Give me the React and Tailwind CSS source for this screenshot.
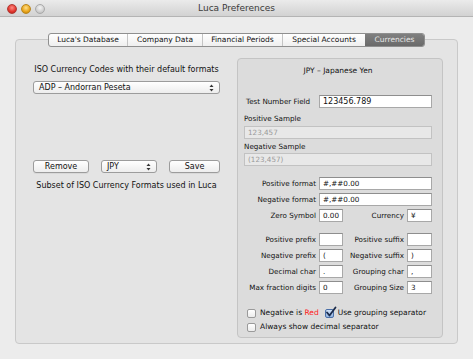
import React from "react";

const F = { fontFamily: '"DejaVu Sans", "Liberation Sans", sans-serif' };

function Arrows() {
  return (
    <svg width="5" height="8" viewBox="0 0 5 8" className="shrink-0">
      <path d="M2.5 0.5 L4.5 3 L0.5 3 Z" fill="#333" />
      <path d="M2.5 7.5 L4.5 5 L0.5 5 Z" fill="#333" />
    </svg>
  );
}

function Field({ value = "", className = "", disabled = false }) {
  return (
    <div
      className={
        "h-[13px] flex items-center px-[3px] text-[7.2px] leading-none border " +
        (disabled
          ? "bg-[#e8e8e8] border-[#c2c2c2] text-[#9a9a9a] "
          : "bg-white border-[#a8a8a8] border-t-[#8e8e8e] text-[#111] ") +
        className
      }
    >
      {value}
    </div>
  );
}

function Btn({ children, className = "" }) {
  return (
    <div
      className={
        "h-[13px] flex items-center justify-center rounded-[3px] border border-[#9c9c9c] bg-gradient-to-b from-[#ffffff] to-[#ededed] text-[8px] leading-none text-[#111] shadow-[0_1px_0_rgba(0,0,0,0.05)] " +
        className
      }
    >
      {children}
    </div>
  );
}

function Check({ checked }) {
  return (
    <div className="relative w-[9px] h-[9px] shrink-0">
      <div
        className={
          "w-[9px] h-[9px] rounded-[2px] border " +
          (checked
            ? "border-[#4a6fa8] bg-gradient-to-b from-[#cfe0f5] to-[#8fb2e0]"
            : "border-[#9a9a9a] bg-gradient-to-b from-white to-[#ececec]")
        }
      />
      {checked && (
        <svg width="12" height="12" viewBox="0 0 12 12" className="absolute left-[0px] top-[-3px]">
          <path d="M2 6.5 L4.5 9.5 L10.5 1.5" stroke="#1a2a4a" strokeWidth="1.8" fill="none" strokeLinecap="round" strokeLinejoin="round" />
        </svg>
      )}
    </div>
  );
}

const tabs = ["Luca's Database", "Company Data", "Financial Periods", "Special Accounts", "Currencies"];
const tabW = [79, 75, 80, 82, 59];

export default function App() {
  return (
    <div style={F} className="w-[473px] h-[359px] bg-[#ececec] flex flex-col overflow-hidden text-[#111]">
      {/* title bar */}
      <div className="relative h-[17px] shrink-0 bg-gradient-to-b from-[#ebebeb] to-[#d2d2d2] border-b border-[#b4b4b4] flex items-center justify-center">
        <div className="absolute left-[7px] top-[4px] flex gap-[4px]">
          <div className="w-[10px] h-[10px] rounded-full bg-[radial-gradient(circle_at_50%_35%,#ff8c84,#e0342c_60%,#a8201a)] border border-[#b03a34]" />
          <div className="w-[10px] h-[10px] rounded-full bg-[radial-gradient(circle_at_50%_35%,#ffe08a,#e8a318_60%,#b07a10)] border border-[#b9861e]" />
          <div className="w-[10px] h-[10px] rounded-full bg-[radial-gradient(circle_at_50%_35%,#f4f4f4,#cfcfcf_60%,#b4b4b4)] border border-[#a9a9a9]" />
        </div>
        <span className="text-[9px] leading-none text-[#3a3a3a]">Luca Preferences</span>
      </div>

      {/* content */}
      <div className="flex flex-col px-[15px] pt-[16px]">
        <div className="relative z-10 self-center flex h-[14px] rounded-[3px] border border-[#8f8f8f] bg-gradient-to-b from-white to-[#efefef] overflow-hidden">
          {tabs.map((t, i) => (
            <div
              key={t}
              style={{ width: tabW[i] }}
              className={
                "flex items-center justify-center text-[7.5px] leading-none " +
                (i === 4
                  ? "bg-gradient-to-b from-[#808080] to-[#6a6a6a] text-[#e6e6e6]"
                  : "text-[#111] ") +
                (i < 3 ? "border-r border-[#c4c4c4]" : "")
              }
            >
              {t}
            </div>
          ))}
        </div>

        <div className="-mt-[8px] h-[305px] rounded-[4px] border border-[#c9c9c9] bg-[#e4e4e4] flex pl-[17px] pr-[14px] pt-[18px] pb-[5px] gap-[17px]">
          {/* left column */}
          <div className="w-[187px] flex flex-col">
            <div className="mt-[7px] h-[10px] text-[8px] leading-[10px] text-center">ISO Currency Codes with their default formats</div>
            <div className="mt-[6px] h-[13px] rounded-[3px] border border-[#9c9c9c] bg-gradient-to-b from-white to-[#ededed] flex items-center justify-between pl-[5px] pr-[5px] text-[8px] leading-none">
              <span>ADP – Andorran Peseta</span>
              <Arrows />
            </div>
            <div className="mt-[66px] flex justify-between">
              <Btn className="w-[56px]">Remove</Btn>
              <div className="w-[56px] h-[13px] rounded-[3px] border border-[#9c9c9c] bg-gradient-to-b from-white to-[#ededed] flex items-center justify-between px-[5px] text-[8px] leading-none">
                <span>JPY</span>
                <Arrows />
              </div>
              <Btn className="w-[51px]">Save</Btn>
            </div>
            <div className="mt-[8px] h-[10px] text-[8px] leading-[10px] text-center">Subset of ISO Currency Formats used in Luca</div>
          </div>

          {/* right group box */}
          <div className="w-[206px] h-[280px] rounded-[4px] border border-[#c4c4c4] bg-[#dcdcdc] flex flex-col pl-[6px] pr-[10px]">
            <div className="mt-[7px] h-[10px] text-[7.5px] leading-[10px] text-center">JPY – Japanese Yen</div>
            <div className="mt-[19px] flex items-center">
              <div className="w-[75px] pl-[2px] text-[7.2px] leading-none">Test Number Field</div>
              <Field value="123456.789" className="flex-1 text-[8px]" />
            </div>
            <div className="mt-[6px] h-[10px] text-[7.2px] leading-[10px]">Positive Sample</div>
            <Field disabled value="123,457" className="mt-[2px]" />
            <div className="mt-[3px] h-[10px] text-[7.2px] leading-[10px]">Negative Sample</div>
            <Field disabled value="(123,457)" className="mt-[1px]" />

            <div className="mt-[11px] grid grid-cols-[72px_24px_58px_25px] gap-x-[3px] gap-y-[3px] items-center text-[7.2px] leading-none">
              <div className="text-right">Positive format</div>
              <Field value="#,##0.00" className="col-span-3" />
              <div className="text-right">Negative format</div>
              <Field value="#,##0.00" className="col-span-3" />
              <div className="text-right">Zero Symbol</div>
              <Field value="0.00" />
              <div className="text-right">Currency</div>
              <Field value="¥" />

              <div className="text-right mt-[8px]">Positive prefix</div>
              <Field className="mt-[8px]" />
              <div className="text-right mt-[8px]">Positive suffix</div>
              <Field className="mt-[8px]" />
              <div className="text-right">Negative prefix</div>
              <Field value="(" />
              <div className="text-right">Negative suffix</div>
              <Field value=")" />
              <div className="text-right">Decimal char</div>
              <Field value="." />
              <div className="text-right">Grouping char</div>
              <Field value="," />
              <div className="text-right">Max fraction digits</div>
              <Field value="0" />
              <div className="text-right">Grouping Size</div>
              <Field value="3" />
            </div>

            <div className="mt-[14px] flex items-center pl-[3px] text-[7.5px] leading-none h-[10px]">
              <Check />
              <span className="ml-[4px]">Negative is <span className="text-[#ff1a1a]">Red</span></span>
              <div className="ml-[6px]"><Check checked /></div>
              <span className="ml-[4px]">Use grouping separator</span>
            </div>
            <div className="mt-[4px] flex items-center pl-[3px] text-[7.5px] leading-none h-[10px]">
              <Check />
              <span className="ml-[4px]">Always show decimal separator</span>
            </div>
          </div>
        </div>
      </div>
    </div>
  );
}
